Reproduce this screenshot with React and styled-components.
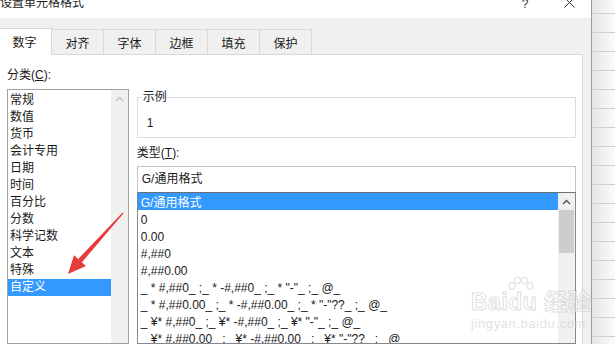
import React from "react";
import styled, { createGlobalStyle } from "styled-components";

const GlobalStyle = createGlobalStyle`
  html, body {
    margin: 0;
    padding: 0;
    background: #ffffff;
  }
  body {
    font-family: "Liberation Sans", "Noto Sans CJK SC", sans-serif;
    font-size: 12px;
    color: #1a1a1a;
  }
`;

const Page = styled.div`
  position: relative;
  display: flex;
  width: 615px;
  height: 344px;
  overflow: hidden;
`;

const Dialog = styled.div`
  display: flex;
  flex-direction: column;
  width: 591px;
  background: #f0f0f0;
  border-right: 1px solid #9c9c9c;
`;

const TitleBar = styled.div`
  flex: none;
  display: flex;
  align-items: flex-start;
  height: 18px;
  background: #ffffff;
  overflow: hidden;
`;

const Title = styled.div`
  flex: 1;
  margin-top: -4px;
  line-height: 14px;
  font-size: 12px;
`;

const TitleButton = styled.div`
  display: flex;
  justify-content: center;
  width: ${({ w }) => w}px;
  margin-top: -3px;
  line-height: 14px;
  font-size: 12px;
  color: #333;
`;

const TabStrip = styled.div`
  flex: none;
  display: flex;
  align-items: flex-end;
  height: 36px;
  margin-left: -2px;
  margin-right: 8px;
  border-bottom: 1px solid #d9d9d9;
`;

const Tab = styled.div`
  display: flex;
  align-items: center;
  justify-content: center;
  box-sizing: border-box;
  width: ${({ active }) => (active ? 55 : 53)}px;
  height: ${({ active }) => (active ? 27 : 25)}px;
  margin-bottom: ${({ active }) => (active ? -1 : 0)}px;
  margin-left: -1px;
  background: ${({ active }) => (active ? "#ffffff" : "#f0f0f0")};
  border: 1px solid #d9d9d9;
  border-bottom: none;
  font-size: 12px;
  padding-bottom: ${({ active }) => (active ? 2 : 0)}px;
`;

const Panel = styled.div`
  flex: 1;
  min-height: 0;
  display: flex;
  gap: 8px;
  margin-right: 8px;
  padding: 12px 6px 0 7px;
  background: #ffffff;
  border-right: 1px solid #d9d9d9;
`;

const Column = styled.div`
  display: flex;
  flex-direction: column;
  width: ${({ w }) => w}px;
  padding-top: ${({ pt }) => pt || 0}px;
`;

const Label = styled.div`
  flex: none;
  line-height: 17px;
  height: 17px;
  margin-top: ${({ mt }) => mt || 0}px;
  margin-bottom: ${({ mb }) => mb}px;
`;

const Key = styled.span`
  text-decoration: underline;
  text-underline-offset: 1px;
`;

const ListBox = styled.div`
  display: flex;
  flex: 1;
  min-height: 0;
  overflow: hidden;
  border: 1px solid ${({ topless }) => (topless ? "#828790" : "#a0a0a0")};
  ${({ topless }) => topless && "border-top: 1px solid #6e6e6e;"}
  background: #ffffff;
`;

const Items = styled.div`
  flex: 1;
  display: flex;
  flex-direction: column;
  padding-top: ${({ pt }) => pt}px;
`;

const Item = styled.div`
  flex: none;
  height: ${({ shift }) => 17 - shift}px;
  padding-top: ${({ shift }) => shift}px;
  line-height: 17px;
  padding-left: ${({ pl }) => pl}px;
  white-space: pre;
  overflow: hidden;
  background: ${({ selected }) => (selected ? "#3399ff" : "transparent")};
  color: ${({ selected }) => (selected ? "#ffffff" : "#1a1a1a")};
`;

const ScrollBar = styled.div`
  flex: none;
  display: flex;
  flex-direction: column;
  align-items: center;
  width: 17px;
  background: #f0f0f0;
`;

const ArrowCell = styled.div`
  display: flex;
  align-items: center;
  justify-content: center;
  height: 17px;
`;

const Thumb = styled.div`
  width: 15px;
  height: 43px;
  background: #cdcdcd;
`;

const GroupBox = styled.fieldset`
  flex: none;
  margin: 0;
  padding: 9px 9px 4px;
  border: 1px solid #dcdcdc;
  box-sizing: border-box;
  height: 49px;
`;

const Legend = styled.legend`
  padding: 0 1px;
  margin-left: -5px;
  line-height: 17px;
`;

const SampleValue = styled.div`
  line-height: 17px;
`;

const TextInput = styled.div`
  flex: none;
  height: 26px;
  box-sizing: border-box;
  border: 1px solid #c4c4c4;
  border-bottom: none;
  padding-left: 4px;
  line-height: 25px;
  background: #ffffff;
`;

const Sheet = styled.div`
  flex: 1;
  background:
    repeating-linear-gradient(
      to bottom,
      transparent 0px,
      transparent 12px,
      #cfcfcf 12px,
      #cfcfcf 13px,
      transparent 13px,
      transparent 19px
    ),
    linear-gradient(to right, #e4e4e4, #fbfbfb);
  background-position: 0 1px, 0 0;
`;

const Overlay = styled.svg`
  position: absolute;
  left: 0;
  top: 0;
  pointer-events: none;
`;

const Watermark = styled.div`
  position: absolute;
  left: 471px;
  top: 276px;
  display: flex;
  flex-direction: column;
  align-items: flex-start;
  font-family: "Liberation Sans", "Noto Sans CJK SC", sans-serif;
  pointer-events: none;
`;

const Paw = styled.svg`
  margin-left: 36px;
  margin-bottom: -10px;
`;

const WatermarkBrand = styled.div`
  font-size: 23px;
  font-weight: bold;
  line-height: 24px;
  letter-spacing: 0.5px;
  -webkit-text-stroke: 1px rgba(195, 195, 195, 0.55);
  color: rgba(255, 255, 255, 0.5);
`;

const WatermarkUrl = styled.div`
  margin-top: 3px;
  font-size: 13px;
  line-height: 14px;
  letter-spacing: 0.6px;
  color: rgba(205, 205, 205, 0.6);
`;

const Chevron = ({ color }) => (
  <svg width="9" height="6" viewBox="0 0 9 6">
    <polyline points="1,5 4.5,1.5 8,5" fill="none" stroke={color} strokeWidth="1.4" />
  </svg>
);

const CloseIcon = () => (
  <svg width="11" height="11" viewBox="0 0 11 11">
    <path d="M0.5 0.5 L10.5 10.5 M10.5 0.5 L0.5 10.5" stroke="#333" strokeWidth="1" />
  </svg>
);

const PawIcon = () => (
  <Paw width="28" height="24" viewBox="0 0 28 24">
    <g fill="rgba(255,255,255,0.5)" stroke="rgba(195,195,195,0.6)" strokeWidth="1">
      <ellipse cx="5" cy="10" rx="3" ry="3.6" />
      <ellipse cx="10.5" cy="4.5" rx="3" ry="3.6" />
      <ellipse cx="17.5" cy="4.5" rx="3" ry="3.6" />
      <ellipse cx="23" cy="10" rx="3" ry="3.6" />
    </g>
  </Paw>
);

const tabs = ["数字", "对齐", "字体", "边框", "填充", "保护"];

const categories = [
  "常规", "数值", "货币", "会计专用", "日期", "时间",
  "百分比", "分数", "科学记数", "文本", "特殊", "自定义",
];

const formats = [
  "G/通用格式",
  "0",
  "0.00",
  "#,##0",
  "#,##0.00",
  '_ * #,##0_ ;_ * -#,##0_ ;_ * "-"_ ;_ @_',
  '_ * #,##0.00_ ;_ * -#,##0.00_ ;_ * "-"??_ ;_ @_',
  '_ ¥* #,##0_ ;_ ¥* -#,##0_ ;_ ¥* "-"_ ;_ @_',
  '_ ¥* #,##0.00_ ;_ ¥* -#,##0.00_ ;_ ¥* "-"??_ ;_ @_',
];

export default function App() {
  return (
    <>
      <GlobalStyle />
      <Page>
        <Dialog>
          <TitleBar>
            <Title>设置单元格格式</Title>
            <TitleButton w={44}>?</TitleButton>
            <TitleButton w={44}>
              <CloseIcon />
            </TitleButton>
          </TitleBar>
          <TabStrip>
            {tabs.map((t, i) => (
              <Tab key={t} active={i === 0}>
                {t}
              </Tab>
            ))}
          </TabStrip>
          <Panel>
            <Column w={122}>
              <Label mb={5}>
                分类(<Key>C</Key>):
              </Label>
              <ListBox>
                <Items pt={2}>
                  {categories.map((c) => (
                    <Item key={c} pl={2} shift={0} selected={c === "自定义"}>
                      {c}
                    </Item>
                  ))}
                </Items>
                <ScrollBar>
                  <ArrowCell>
                    <Chevron color="#c2c2c2" />
                  </ArrowCell>
                </ScrollBar>
              </ListBox>
            </Column>
            <Column w={440} pt={22}>
              <GroupBox>
                <Legend>示例</Legend>
                <SampleValue>1</SampleValue>
              </GroupBox>
              <Label mt={7} mb={4}>
                类型(<Key>T</Key>):
              </Label>
              <TextInput>G/通用格式</TextInput>
              <ListBox topless>
                <Items pt={0}>
                  {formats.map((f, i) => (
                    <Item key={f} pl={3} shift={2} selected={i === 0}>
                      {f}
                    </Item>
                  ))}
                </Items>
                <ScrollBar>
                  <ArrowCell>
                    <Chevron color="#505050" />
                  </ArrowCell>
                  <Thumb />
                </ScrollBar>
              </ListBox>
            </Column>
          </Panel>
        </Dialog>
        <Sheet />
        <Watermark>
          <PawIcon />
          <WatermarkBrand>Baidu 经验</WatermarkBrand>
          <WatermarkUrl>jingyan.baidu.com</WatermarkUrl>
        </Watermark>
        <Overlay width="615" height="344" viewBox="0 0 615 344">
          <polygon
            points="122.6,212.6 123.4,213.4 81.8,262.4 78.2,259"
            fill="#e63c3c"
          />
          <polygon points="68,274 74,255.3 86,266.1" fill="#e63c3c" />
        </Overlay>
      </Page>
    </>
  );
}
